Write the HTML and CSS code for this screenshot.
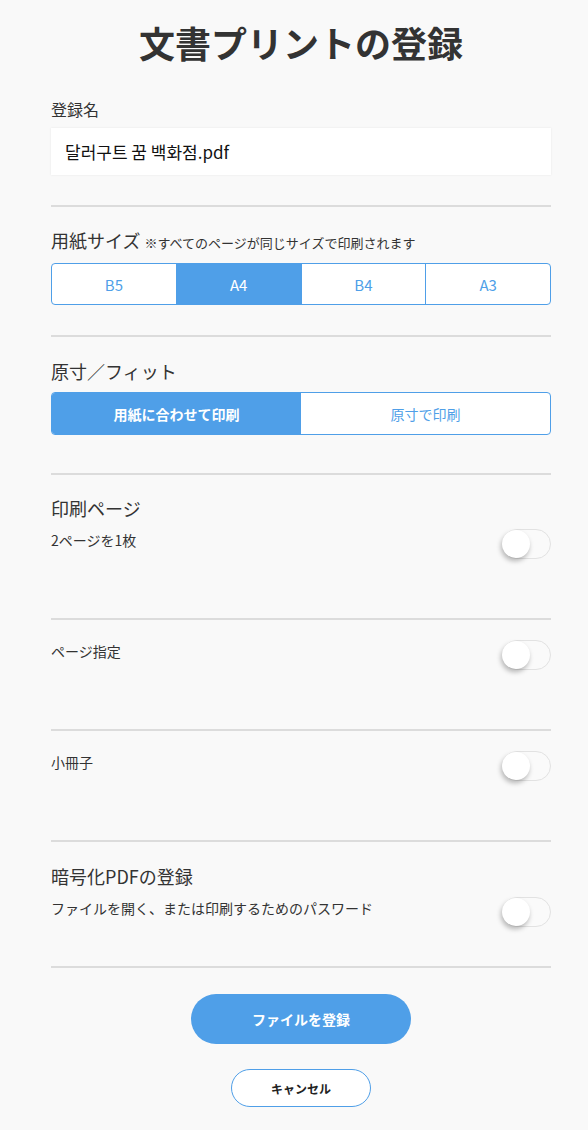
FILE: index.html
```html
<!DOCTYPE html>
<html lang="ja">
<head>
  <meta charset="UTF-8">
  <meta name="viewport" content="width=device-width, initial-scale=1.0">
  <title>文書プリントの登録</title>
  <link rel="stylesheet" href="styles.css">
</head>
<body>
  <div class="page">
    <h1 class="title">文書プリントの登録</h1>

    <div class="name-block">
      <label class="label" for="docName">登録名</label>
      <div class="name-box" id="docName">달러구트 꿈 백화점.pdf</div>
    </div>

    <div class="section size-section">
      <div class="section-title">用紙サイズ <span class="note">※すべてのページが同じサイズで印刷されます</span></div>
      <div class="segment size">
        <div class="seg-item">B5</div>
        <div class="seg-item active">A4</div>
        <div class="seg-item">B4</div>
        <div class="seg-item">A3</div>
      </div>
    </div>

    <div class="section fit-section">
      <div class="section-title">原寸／フィット</div>
      <div class="segment fit">
        <div class="seg-item active">用紙に合わせて印刷</div>
        <div class="seg-item">原寸で印刷</div>
      </div>
    </div>

    <div class="section option">
      <div class="section-title">印刷ページ</div>
      <div class="row">
        <span class="row-text">2ページを1枚</span>
        <span class="toggle"><span class="knob"></span></span>
      </div>
    </div>

    <div class="section option">
      <div class="row">
        <span class="row-text">ページ指定</span>
        <span class="toggle"><span class="knob"></span></span>
      </div>
    </div>

    <div class="section option">
      <div class="row">
        <span class="row-text">小冊子</span>
        <span class="toggle"><span class="knob"></span></span>
      </div>
    </div>

    <div class="section option last">
      <div class="section-title">暗号化PDFの登録</div>
      <div class="row">
        <span class="row-text">ファイルを開く、または印刷するためのパスワード</span>
        <span class="toggle"><span class="knob"></span></span>
      </div>
    </div>

    <div class="actions">
      <button class="btn-primary">ファイルを登録</button>
      <button class="btn-cancel">キャンセル</button>
    </div>
  </div>
</body>
</html>
```

FILE: styles.css
```css
body {
  margin: 0;
  background: #f9f9f9;
  color: #333;
  font-family: "Noto Sans CJK JP", "Noto Sans CJK KR", sans-serif;
}

.page {
  width: 500px;
  padding: 0 37px 0 51px;
}

.title {
  margin: 0;
  padding-top: 17px;
  font-size: 36px;
  line-height: 50px;
  font-weight: bold;
  text-align: center;
}

.name-block {
  padding: 30px 0 30px;
}

.label {
  display: block;
  font-size: 16px;
  line-height: 24px;
  margin-bottom: 7px;
}

.name-box {
  height: 47px;
  box-sizing: border-box;
  padding: 0 14px;
  background: #fff;
  box-shadow: 0 0 2px rgba(0, 0, 0, 0.08);
  font-size: 17px;
  line-height: 47px;
  color: #111;
}

.section {
  border-top: 2px solid #dcdcdc;
  padding-top: 21px;
}

.section-title {
  font-size: 18px;
  line-height: 26px;
  margin-bottom: 8px;
}

.note {
  font-size: 13px;
}

.size-section {
  padding-top: 20px;
  padding-bottom: 30px;
}

.size-section .section-title {
  margin-bottom: 7px;
}

.fit-section {
  padding-bottom: 38px;
}

.segment {
  display: flex;
  height: 42px;
  box-sizing: border-box;
  border: 1px solid #4f9fe8;
  border-radius: 4px;
  overflow: hidden;
  background: #fff;
}

.seg-item {
  flex: 1;
  display: flex;
  align-items: center;
  justify-content: center;
  color: #4f9fe8;
}

.size .seg-item {
  font-size: 15px;
}

.size .seg-item + .seg-item {
  border-left: 1px solid #4f9fe8;
}

.fit {
  height: 43px;
}

.fit .seg-item {
  font-size: 14px;
}

.seg-item.active {
  background: #4f9fe8;
  color: #fff;
}

.fit .seg-item.active {
  font-weight: bold;
}

.option {
  padding-top: 20px;
  padding-bottom: 59px;
}

.option.last {
  padding-top: 21px;
  padding-bottom: 39px;
}

.row {
  display: flex;
  justify-content: space-between;
  align-items: flex-start;
}

.row-text {
  font-size: 14px;
  line-height: 22px;
}

.toggle {
  position: relative;
  width: 49px;
  height: 30px;
  box-sizing: border-box;
  border: 1px solid #e2e2e2;
  border-radius: 15px;
  background: #fafafa;
}

.knob {
  position: absolute;
  top: 0;
  left: -1px;
  width: 28px;
  height: 28px;
  border-radius: 50%;
  background: #fff;
  box-shadow: -1px 3px 5px rgba(0, 0, 0, 0.28);
}

.actions {
  border-top: 2px solid #dcdcdc;
  padding-top: 26px;
  display: flex;
  flex-direction: column;
  align-items: center;
  gap: 25px;
}

.btn-primary {
  width: 220px;
  height: 50px;
  border: none;
  border-radius: 25px;
  background: #4f9fe8;
  color: #fff;
  font-family: inherit;
  font-size: 14px;
  font-weight: bold;
  cursor: pointer;
}

.btn-cancel {
  width: 140px;
  height: 38px;
  border: 1px solid #4f9fe8;
  border-radius: 19px;
  background: #fff;
  color: #222;
  font-family: inherit;
  font-size: 12px;
  font-weight: bold;
  cursor: pointer;
}
```
